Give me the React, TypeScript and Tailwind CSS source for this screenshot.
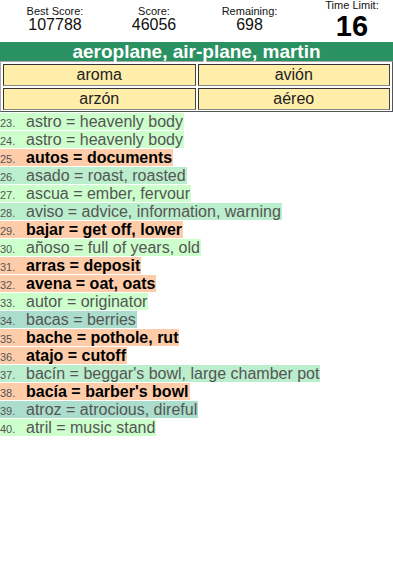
import React from "react";

type Item = { n: number; text: string; kind: "g" | "p" | "m" | "t" };

const items: Item[] = [
  { n: 23, text: "astro = heavenly body", kind: "g" },
  { n: 24, text: "astro = heavenly body", kind: "g" },
  { n: 25, text: "autos = documents", kind: "p" },
  { n: 26, text: "asado = roast, roasted", kind: "m" },
  { n: 27, text: "ascua = ember, fervour", kind: "g" },
  { n: 28, text: "aviso = advice, information, warning", kind: "m" },
  { n: 29, text: "bajar = get off, lower", kind: "p" },
  { n: 30, text: "añoso = full of years, old", kind: "g" },
  { n: 31, text: "arras = deposit", kind: "p" },
  { n: 32, text: "avena = oat, oats", kind: "p" },
  { n: 33, text: "autor = originator", kind: "g" },
  { n: 34, text: "bacas = berries", kind: "t" },
  { n: 35, text: "bache = pothole, rut", kind: "p" },
  { n: 36, text: "atajo = cutoff", kind: "p" },
  { n: 37, text: "bacín = beggar's bowl, large chamber pot", kind: "m" },
  { n: 38, text: "bacía = barber's bowl", kind: "p" },
  { n: 39, text: "atroz = atrocious, direful", kind: "t" },
  { n: 40, text: "atril = music stand", kind: "g" },
];

const bg: Record<Item["kind"], string> = {
  g: "bg-[#ccffcc] text-[#555555]",
  p: "bg-[#ffccaa] text-black font-bold",
  m: "bg-[#bbeecc] text-[#555555]",
  t: "bg-[#aaddcc] text-[#555555]",
};

function Cell({ children }: { children: React.ReactNode }) {
  return (
    <div className="h-[22px] bg-[#ffeeaa] border border-t-[#333333] border-l-[#333333] border-r-[#444444] border-b-[#888888] flex items-center justify-center text-[16px] leading-none text-[#222222]">
      {children}
    </div>
  );
}

export default function App() {
  return (
    <div className="w-[393px] h-[563px] bg-white" style={{ fontFamily: '"Liberation Sans", Arial, sans-serif' }}>
      <div className="h-[42px] grid grid-cols-[110px_88px_103px_1fr] text-[#111111]">
        <div className="flex flex-col items-center pt-[5px]">
          <div className="text-[11px] leading-[12px]">Best Score:</div>
          <div className="text-[16px] leading-[16px]">107788</div>
        </div>
        <div className="flex flex-col items-center pt-[5px]">
          <div className="text-[11px] leading-[12px]">Score:</div>
          <div className="text-[16px] leading-[16px]">46056</div>
        </div>
        <div className="flex flex-col items-center pt-[5px]">
          <div className="text-[11px] leading-[12px]">Remaining:</div>
          <div className="text-[16px] leading-[16px]">698</div>
        </div>
        <div className="flex flex-col items-center pl-[10px]">
          <div className="text-[11px] leading-[11px]">Time Limit:</div>
          <div className="text-[29px] leading-[26px] mt-[2px] font-bold text-black">16</div>
        </div>
      </div>
      <div className="h-[19px] bg-[#2a9162] text-white font-bold text-[19px] leading-[19px] text-center">
        aeroplane, air-plane, martin
      </div>
      <div className="border border-t-[#aaaaaa] border-l-[#aaaaaa] border-r-[#555555] border-b-[#555555] p-[2px] grid grid-cols-2 gap-[2px] h-[51px]">
        <Cell>aroma</Cell>
        <Cell>avión</Cell>
        <Cell>arzón</Cell>
        <Cell>aéreo</Cell>
      </div>
      <div className="pt-[1px] flex flex-col gap-[1px]">
        {items.map((it) => (
          <div key={it.n} className={`flex w-fit items-baseline h-[17px] leading-[17px] pr-[1px] ${bg[it.kind]}`}>
            <span className="w-[26px] shrink-0 text-[11px] font-normal text-[#555555]">{it.n}.</span>
            <span className="text-[16px]">{it.text}</span>
          </div>
        ))}
      </div>
    </div>
  );
}
